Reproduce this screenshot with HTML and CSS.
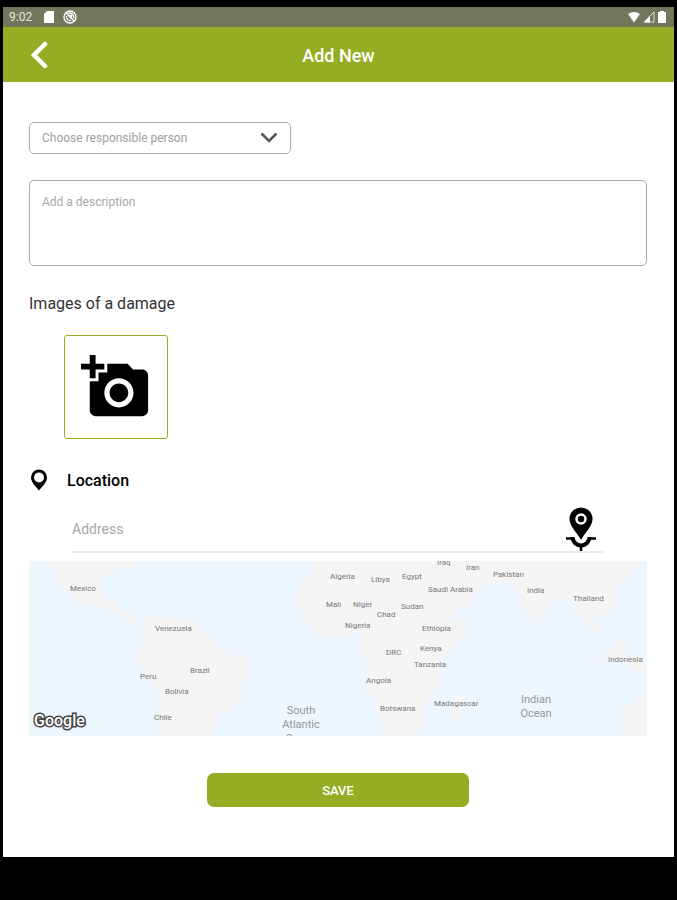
FILE: index.html
```html
<!DOCTYPE html>
<html lang="en">
<head>
    <meta charset="UTF-8">
    <meta name="viewport" content="width=device-width, initial-scale=1.0">
    <title>Add New</title>
    <link rel="stylesheet" href="styles.css">
</head>
<body>

<div class="screen">

    <!-- Status bar -->
    <div class="status">
        <span class="time">9:02</span>
        <svg width="12" height="14" viewBox="0 0 12 14"><path d="M4 1h7v12H1V4z" fill="#fff"/></svg>
        <svg width="14" height="14" viewBox="0 0 14 14" fill="none" stroke="#fff">
            <circle cx="7" cy="7" r="6" stroke-width="1.4"/>
            <path d="M3 3l8 8M5 3.500a4 4 0 0 1 5.500 5M3.500 6a4 4 0 0 0 4.500 4.500M6 5.500h2.500v2.500" stroke-width="1.300"/>
        </svg>
        <span class="space"></span>
        <svg width="14" height="12" viewBox="0 0 14 12"><path d="M1 3Q7-1 13 3L7 11.500z" fill="#fff"/></svg>
        <svg width="12" height="12" viewBox="0 0 12 12"><path d="M11 1v10H1z" fill="none" stroke="#ddd"/><path d="M7 5v6.500H1z" fill="#fff"/></svg>
        <svg width="10" height="14" viewBox="0 0 10 14"><path d="M3 1h4v1h2v11H1V2h2z" fill="#fff"/></svg>
    </div>

    <!-- Header -->
    <header class="header">
        <button class="back" type="button" aria-label="Back">
            <svg width="18" height="28" viewBox="0 0 18 28"><path d="M15 3L4 14l11 11" fill="none" stroke="#fff" stroke-width="4.500" stroke-linecap="round"/></svg>
        </button>
        <h1>Add New</h1>
    </header>

    <!-- Form -->
    <form class="form">
        <div class="select-box">
            <select aria-label="Responsible person">
                <option>Choose responsible person</option>
            </select>
            <svg class="arrow" width="18" height="12" viewBox="0 0 18 12"><path d="M1.500 1.500L9 9l7.500-7.500" fill="none" stroke="#555" stroke-width="2.500"/></svg>
        </div>

        <textarea class="description" placeholder="Add a description" aria-label="Description"></textarea>

        <h2 class="images-title">Images of a damage</h2>
        <button class="add-photo" type="button" aria-label="Add photo">
            <svg width="70" height="70" viewBox="0 0 24 24"><path d="M3 4V1h2v3h3v2H5v3H3V6H0V4h3zm3 6V7h3V4h7l1.830 2H21c1.100 0 2 .9 2 2v12c0 1.100-.9 2-2 2H5c-1.100 0-2-.9-2-2V10h3zm7 9c2.760 0 5-2.240 5-5s-2.240-5-5-5-5 2.240-5 5 2.240 5 5 5zm-3.200-5c0 1.770 1.430 3.200 3.200 3.200s3.200-1.430 3.200-3.200-1.430-3.200-3.200-3.200-3.200 1.430-3.200 3.200z"/></svg>
        </button>

        <div class="location-title">
            <svg width="20" height="22" viewBox="0 0 20 22"><path fill-rule="evenodd" d="M10 0.500a8 8 0 0 1 8 8c0 5-5 9-8 13-3-4-8-8-8-13a8 8 0 0 1 8-8zM10 3.500a5 5 0 1 0 0 10 5 5 0 0 0 0-10z"/></svg>
            <h2><label for="address">Location</label></h2>
        </div>

        <div class="address">
            <input id="address" type="text" placeholder="Address">
            <button type="button" aria-label="Use my location">
                <svg width="32" height="44" viewBox="0 0 32 44">
                    <path d="M1 31.500h6M25 31.500h6M16 37v7" stroke="#000" stroke-width="2.500"/>
                    <path d="M7.500 30a8.500 8.500 0 0 0 17 0" fill="none" stroke="#000" stroke-width="4"/>
                    <path d="M16 .5a11.500 11.500 0 0 1 11.500 11.500c0 7-7 13-11.500 21C11.500 25 4.500 19 4.500 12A11.500 11.500 0 0 1 16 .5z" stroke="#fff" stroke-width="2" paint-order="stroke"/>
                    <circle cx="16" cy="12" r="4.500" stroke="#fff" stroke-width="2.500"/>
                </svg>
            </button>
        </div>

        <svg class="map" viewBox="0 0 618 175" role="img" aria-label="Map">
            <rect width="618" height="175" fill="#eef6fe"/>
            <g fill="#f5f5f5">
                <path d="M19 0L31 21 38 30 48 37 74 47 90 53 98 61 112 66 103 58 101 51 88 48 86 40 76 38 71 30 70 17 81 10 98 7 106 10 111 20 106 0z"/>
                <path d="M114 61L125 55 141 57 158 61 171 69 182 77 188 87 205 94 221 100 222 108 211 122 208 141 191 154 181 175H128L134 141 124 124 111 101 110 94 114 81z"/>
                <path d="M120 35l16 5 8 5-14-3zM150 47l10 1v3l-9-1z"/>
                <path d="M288 0L278 17 271 27 270 45 273 54 288 72 305 74 328 72 333 91 341 111 339 127 351 154 354 175H384L394 161 398 141 411 124 411 104 428 81 441 62 424 57 431 51 451 31 457 21 481 21 494 47 508 72 511 51 528 34 544 41 554 61 571 77 564 57 581 51 588 31 584 24 605 10 611 0z"/>
                <path d="M434 128l4 9-10 23-6-3 2-18zM549 77l12 11 14 15-8-3zM579 88l15-10 5 5-8 18-12-5zM600 94l18 5v14l-18-8zM594 150l14-12 10-3v40h-24z"/>
            </g>
            <g class="country">
                <text x="41" y="30">Mexico</text>
                <text x="126" y="70">Venezuela</text>
                <text x="161" y="112">Brazil</text>
                <text x="111" y="118">Peru</text>
                <text x="136" y="133">Bolivia</text>
                <text x="125" y="159">Chile</text>
                <text x="301" y="18">Algeria</text>
                <text x="342" y="21">Libya</text>
                <text x="373" y="18">Egypt</text>
                <text x="408" y="4">Iraq</text>
                <text x="437" y="9">Iran</text>
                <text x="464" y="16">Pakistan</text>
                <text x="399" y="31">Saudi Arabia</text>
                <text x="498" y="32">India</text>
                <text x="544" y="40">Thailand</text>
                <text x="297" y="46">Mali</text>
                <text x="324" y="46">Niger</text>
                <text x="348" y="56">Chad</text>
                <text x="372" y="48">Sudan</text>
                <text x="316" y="67">Nigeria</text>
                <text x="393" y="70">Ethiopia</text>
                <text x="357" y="94">DRC</text>
                <text x="391" y="90">Kenya</text>
                <text x="385" y="106">Tanzania</text>
                <text x="579" y="101">Indonesia</text>
                <text x="337" y="122">Angola</text>
                <text x="351" y="150">Botswana</text>
                <text x="405" y="145">Madagascar</text>
            </g>
            <g class="ocean">
                <text x="272" y="153">South</text>
                <text x="272" y="167">Atlantic</text>
                <text x="272" y="181">Ocean</text>
                <text x="507" y="142">Indian</text>
                <text x="507" y="156">Ocean</text>
            </g>
            <text class="google" x="5" y="165">Google</text>
        </svg>

        <button class="save" type="submit">SAVE</button>
    </form>
</div>

</body>
</html>
```
FILE: styles.css
```css
* { box-sizing: border-box; }
body {
    font-family: Roboto, Arial, sans-serif;
    background-color: #000;
    margin: 0;
    padding: 7px 3px 0;
}
button {
    padding: 0;
    border: 0;
    background: none;
    cursor: pointer;
}
svg { display: block; }
.screen {
    background-color: #fff;
}
.status {
    display: flex;
    align-items: center;
    gap: 2px;
    height: 20px;
    padding: 0 7px 0 6px;
    background-color: #73765c;
}
.time {
    margin-right: 9px;
    font-size: 12px;
    color: #e6e6e0;
}
.time + svg { margin-right: 6px; }
.space { flex: 1; }
.header {
    display: grid;
    grid-template-columns: 72px 1fr 72px;
    align-items: center;
    height: 55px;
    background-color: #95ad22;
}
.back {
    justify-self: center;
}
.header h1 {
    margin: 0;
    padding-top: 2px;
    font-size: 18px;
    font-weight: 500;
    text-align: center;
    color: #fff;
}
.form {
    display: flex;
    flex-direction: column;
    align-items: flex-start;
    padding: 40px 27px 50px 26px;
}
.select-box {
    position: relative;
    width: 262px;
    max-width: 100%;
}
.select-box select {
    display: block;
    width: 100%;
    height: 32px;
    padding: 0 40px 0 12px;
    border: 1px solid #aaa;
    border-radius: 5px;
    background-color: #fff;
    font: 12px Roboto, Arial, sans-serif;
    color: #a0a0a0;
    appearance: none;
}
.arrow {
    position: absolute;
    top: 10px;
    right: 13px;
    pointer-events: none;
}
.description {
    width: 100%;
    height: 86px;
    margin-top: 26px;
    padding: 14px 12px;
    border: 1px solid #aaa;
    border-radius: 5px;
    font: 12px Roboto, Arial, sans-serif;
    resize: none;
}
.description::placeholder, .address input::placeholder { color: #a8a8a8; }
.images-title {
    margin: 28px 0 21px;
    font-size: 16px;
    font-weight: 400;
    line-height: 20px;
    color: #333;
}
.add-photo {
    display: flex;
    align-items: center;
    justify-content: center;
    width: 104px;
    height: 104px;
    margin-left: 35px;
    border: 1px solid #95ad22;
    border-radius: 3px;
}
.location-title {
    display: flex;
    align-items: center;
    gap: 18px;
    height: 22px;
    margin-top: 30px;
}
.location-title h2 {
    margin: 0;
    font-size: 16px;
    font-weight: 500;
}
.address {
    display: flex;
    align-self: stretch;
    margin: 16px 44px 8px 43px;
    padding-right: 6px;
    border-bottom: 2px solid #ebebeb;
}
.address input {
    flex: 1;
    min-width: 0;
    padding: 0;
    border: 0;
    font: 14px Roboto, Arial, sans-serif;
}
.map {
    width: 100%;
    height: auto;
}
.country {
    font-size: 8px;
    fill: #777;
}
.ocean {
    font-size: 11px;
    text-anchor: middle;
    fill: #9299a0;
}
.google {
    font-size: 16px;
    font-weight: 500;
    fill: #fff;
    stroke: #444;
    stroke-width: 3px;
    paint-order: stroke;
}
.save {
    align-self: center;
    width: 262px;
    max-width: 100%;
    height: 34px;
    margin-top: 37px;
    border-radius: 7px;
    background-color: #95ad22;
    font: 500 13px Roboto, Arial, sans-serif;
    color: #fff;
}
```
